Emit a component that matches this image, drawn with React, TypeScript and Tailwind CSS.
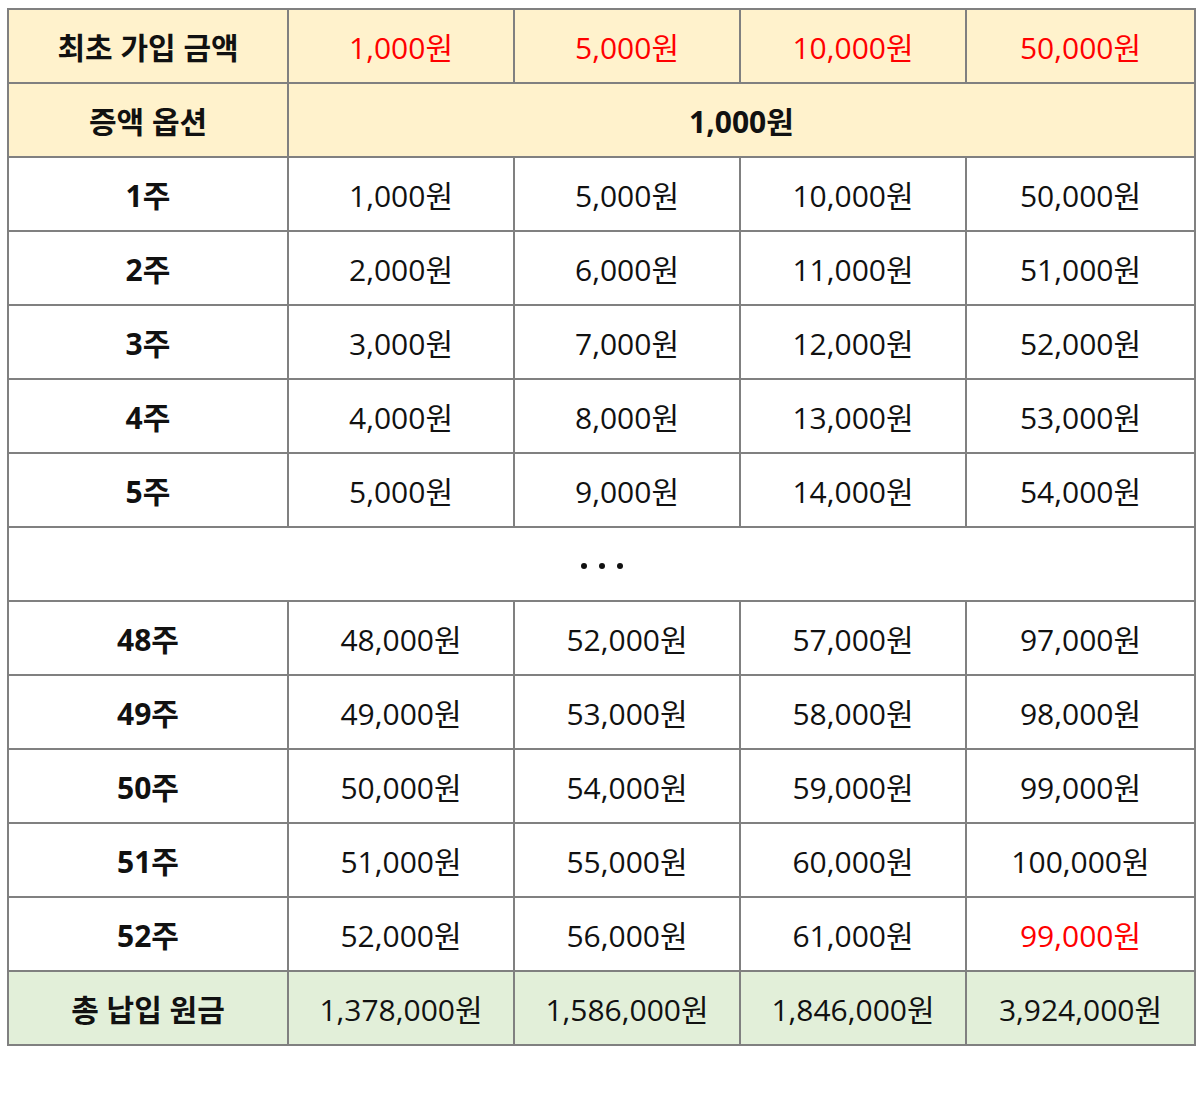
import React from "react";

const rows1 = [
  ["1주", "1,000원", "5,000원", "10,000원", "50,000원"],
  ["2주", "2,000원", "6,000원", "11,000원", "51,000원"],
  ["3주", "3,000원", "7,000원", "12,000원", "52,000원"],
  ["4주", "4,000원", "8,000원", "13,000원", "53,000원"],
  ["5주", "5,000원", "9,000원", "14,000원", "54,000원"],
];
const rows2 = [
  ["48주", "48,000원", "52,000원", "57,000원", "97,000원"],
  ["49주", "49,000원", "53,000원", "58,000원", "98,000원"],
  ["50주", "50,000원", "54,000원", "59,000원", "99,000원"],
  ["51주", "51,000원", "55,000원", "60,000원", "100,000원"],
  ["52주", "52,000원", "56,000원", "61,000원", "99,000원"],
];

const td = "border-2 border-[#808080] text-center align-middle h-[74px] p-0 pt-[3px]";

export default function App() {
  return (
    <div
      className="bg-white w-[1200px] h-[1113px] pt-[8px] pl-[7px] text-[#111] text-[30px] leading-[40px]"
      style={{ fontFamily: '"Open Sans", "Noto Sans CJK KR", sans-serif' }}
    >
      <table className="border-collapse w-[1187px] table-fixed">
        <colgroup>
          <col className="w-[280px]" />
          <col className="w-[226px]" />
          <col className="w-[226px]" />
          <col className="w-[226px]" />
          <col className="w-[229px]" />
        </colgroup>
        <tbody>
          <tr className="bg-[#fff2cc]">
            <td className={`${td} font-bold`}>최초 가입 금액</td>
            <td className={`${td} text-[#ff0000]`}>1,000원</td>
            <td className={`${td} text-[#ff0000]`}>5,000원</td>
            <td className={`${td} text-[#ff0000]`}>10,000원</td>
            <td className={`${td} text-[#ff0000]`}>50,000원</td>
          </tr>
          <tr className="bg-[#fff2cc]">
            <td className={`${td} font-bold`}>증액 옵션</td>
            <td className={`${td} font-bold`} colSpan={4}>1,000원</td>
          </tr>
          {rows1.map((r) => (
            <tr key={r[0]}>
              <td className={`${td} font-bold`}>{r[0]}</td>
              {r.slice(1).map((c, i) => (
                <td key={i} className={td}>{c}</td>
              ))}
            </tr>
          ))}
          <tr>
            <td className="border-2 border-[#808080] h-[74px] p-0" colSpan={5}>
              <div className="flex justify-center items-center gap-[12px] pt-[4px]">
                <span className="block w-[6px] h-[6px] rounded-full bg-[#111]" />
                <span className="block w-[6px] h-[6px] rounded-full bg-[#111]" />
                <span className="block w-[6px] h-[6px] rounded-full bg-[#111]" />
              </div>
            </td>
          </tr>
          {rows2.map((r) => (
            <tr key={r[0]}>
              <td className={`${td} font-bold`}>{r[0]}</td>
              {r.slice(1).map((c, i) => (
                <td key={i} className={`${td} ${r[0] === "52주" && i === 3 ? "text-[#ff0000]" : ""}`}>{c}</td>
              ))}
            </tr>
          ))}
          <tr className="bg-[#e2efd9]">
            <td className={`${td} font-bold`}>총 납입 원금</td>
            <td className={td}>1,378,000원</td>
            <td className={td}>1,586,000원</td>
            <td className={td}>1,846,000원</td>
            <td className={td}>3,924,000원</td>
          </tr>
        </tbody>
      </table>
    </div>
  );
}
